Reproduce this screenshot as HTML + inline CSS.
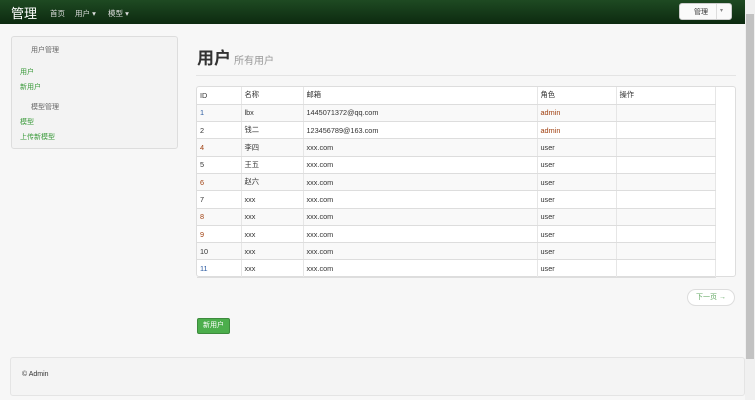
<!DOCTYPE html>
<html><head><meta charset="utf-8"><style>
*{box-sizing:border-box;margin:0;padding:0}
body{width:755px;height:400px;overflow:hidden;background:#f7f7f7;font-family:"Liberation Sans","Noto Sans CJK SC",sans-serif;font-size:8px;color:#333;position:relative}
.nav{position:absolute;left:0;top:0;width:745px;height:24px;background:linear-gradient(#1e4a22,#0d2a10);color:#fff}
.brand{position:absolute;left:11px;top:3px;font-size:13px}
.nl{position:absolute;top:8px;font-size:7.5px;color:#ddd}
.btn{position:absolute;left:679px;top:3px;width:53px;height:17px;background:#fafafa;border-radius:3px;border:1px solid #ccc}
.sb{position:absolute;left:745px;top:0;width:10px;height:400px;background:#f0f0f0}
.sb div{position:absolute;left:1px;top:14px;width:8px;height:345px;background:#c2c2c2}
.side{position:absolute;left:11px;top:36px;width:167px;height:113px;background:#f3f3f3;border:1px solid #ddd;border-radius:3px}
.side span{position:absolute;font-size:7px}
.g{color:#3a9a3a}
h1{position:absolute;left:197px;top:44px;font-size:17px;font-weight:bold;color:#333}
h1 small{font-size:10px;font-weight:normal;color:#999;margin-left:3px}
.hr{position:absolute;left:196px;top:75px;width:540px;border-top:1px solid #e4e4e4}
.tw{position:absolute;left:196px;top:86px;width:540px;height:191px;background:#fff;border:1px solid #ddd;border-radius:3px}
table{position:absolute;left:0;top:0;width:519px;border-collapse:collapse;font-size:7.3px}
td{height:17.3px;border-right:1px solid #e6e6e6;border-bottom:1px solid #ddd;padding-left:3px}
tr:nth-child(even) td{background:#f9f9f9}
.n{color:#2a5aa0}.o{color:#a04010}
.pg{position:absolute;left:687px;top:289px;width:48px;height:17px;border:1px solid #ddd;border-radius:9px;background:#fff;color:#6a6;font-size:7px;text-align:center;line-height:15px}
.nb{position:absolute;left:197px;top:318px;width:33px;height:16px;background:#4cae4c;border:1px solid #3d8b3d;border-radius:2px;color:#fff;font-size:7px;text-align:center;line-height:14px}
.ft{position:absolute;left:10px;top:357px;width:735px;height:39px;background:#f4f4f4;border:1px solid #e4e4e4;border-radius:3px}
.ft span{position:absolute;left:11px;top:13px;font-size:7px}
</style></head><body>
<div class="nav"><span class="brand">管理</span><span class="nl" style="left:50px">首页</span><span class="nl" style="left:75px">用户 ▾</span><span class="nl" style="left:108px">模型 ▾</span></div>
<div class="btn"><span style="position:absolute;left:14px;top:3px;font-size:7px">管理</span><span style="position:absolute;left:36px;top:0;height:15px;border-left:1px solid #ddd"></span><span style="position:absolute;left:40px;top:3px;font-size:6px;color:#888">▾</span></div>
<div class="sb"><div></div></div>
<div class="side"><span style="left:19px;top:8px;color:#666">用户管理</span><span class="g" style="left:8px;top:30px">用户</span><span class="g" style="left:8px;top:45px">新用户</span><span style="left:19px;top:65px;color:#666">模型管理</span><span class="g" style="left:8px;top:80px">模型</span><span class="g" style="left:8px;top:95px">上传新模型</span></div>
<h1>用户<small>所有用户</small></h1>
<div class="hr"></div>
<div class="tw"><table>
<tr><td style="width:44px">ID</td><td style="width:62px">名称</td><td style="width:234px">邮箱</td><td style="width:79px">角色</td><td>操作</td></tr>
<tr><td class="n">1</td><td>lbx</td><td>1445071372@qq.com</td><td class="o">admin</td><td></td></tr>
<tr><td>2</td><td>钱二</td><td>123456789@163.com</td><td class="o">admin</td><td></td></tr>
<tr><td class="o">4</td><td>李四</td><td>xxx.com</td><td>user</td><td></td></tr>
<tr><td>5</td><td>王五</td><td>xxx.com</td><td>user</td><td></td></tr>
<tr><td class="o">6</td><td>赵六</td><td>xxx.com</td><td>user</td><td></td></tr>
<tr><td>7</td><td>xxx</td><td>xxx.com</td><td>user</td><td></td></tr>
<tr><td class="o">8</td><td>xxx</td><td>xxx.com</td><td>user</td><td></td></tr>
<tr><td class="o">9</td><td>xxx</td><td>xxx.com</td><td>user</td><td></td></tr>
<tr><td>10</td><td>xxx</td><td>xxx.com</td><td>user</td><td></td></tr>
<tr><td class="n">11</td><td>xxx</td><td>xxx.com</td><td>user</td><td></td></tr>
</table></div>
<div class="pg">下一页 →</div>
<div class="nb">新用户</div>
<div class="ft"><span>© Admin</span></div>
</body></html>
